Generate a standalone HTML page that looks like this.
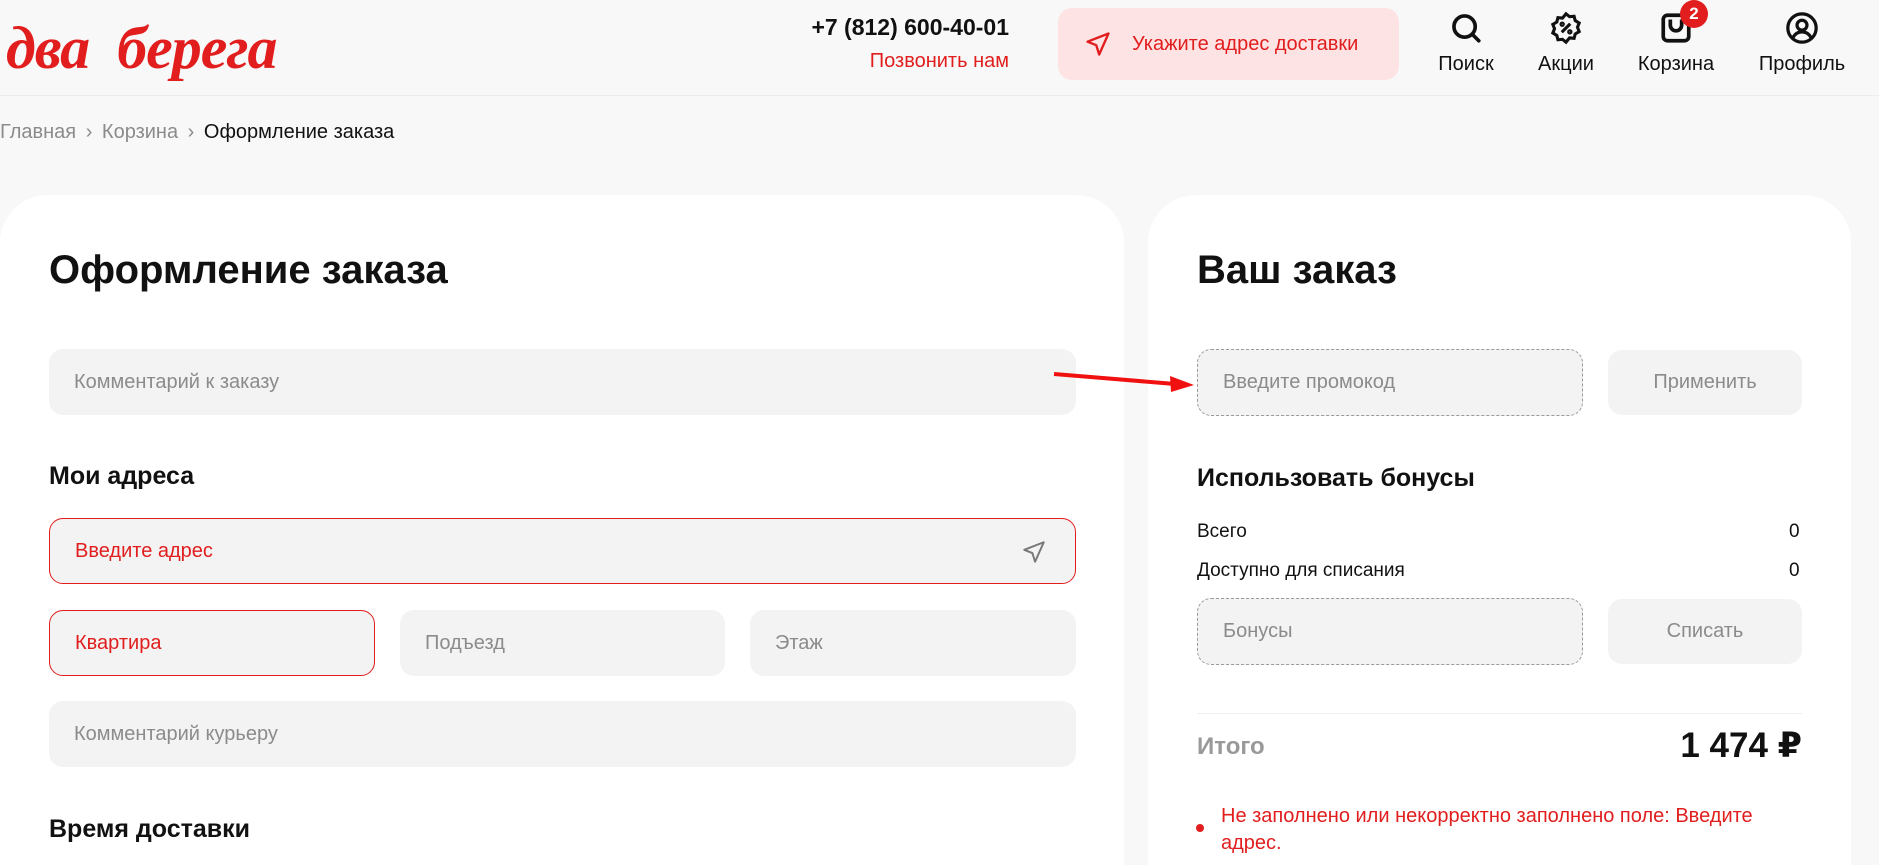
<!DOCTYPE html>
<html><head><meta charset="utf-8"><style>
*{box-sizing:border-box;margin:0;padding:0}
body{width:1879px;height:865px;overflow:hidden;background:#f8f8f8;font-family:"Liberation Sans","DejaVu Sans",sans-serif;color:#111;position:relative}
.a{position:absolute}
.hdr{left:0;top:0;width:1879px;height:96px;border-bottom:1px solid #ececec}
.logo{left:6px;top:14px;font-family:"Liberation Serif",serif;font-style:italic;font-weight:bold;font-size:60px;color:#e11d1d;letter-spacing:-1px}
.ico{text-align:center;width:120px;font-size:20px}
.ico svg{display:block;margin:0 auto 8px}
.card{background:#fff;border-radius:48px 48px 0 0}
.inp{background:#f3f3f3;border-radius:14px;font-size:20px;color:#8b8b8b;padding-left:25px;display:flex;align-items:center}
.btn{background:#f3f3f3;border-radius:14px;font-size:20px;color:#8b8b8b;display:flex;align-items:center;justify-content:center}
.red{border:1px solid #e11d1d;color:#e11d1d}
.dash{border:1px dashed #9a9a9a}
h1{font-size:40px;font-weight:bold}
h2{font-size:25px;font-weight:bold}
.t20{font-size:19px}
</style></head><body>
<div class="a hdr"></div>
<div class="a logo">два&nbsp;&nbsp;берега</div>
<div class="a" style="right:870px;top:14px;font-size:23px;font-weight:bold;text-align:right">+7 (812) 600-40-01</div>
<div class="a" style="right:870px;top:50px;font-size:20px;color:#e11d1d">Позвонить нам</div>
<div class="a" style="left:1058px;top:8px;width:341px;height:72px;background:#fde3e3;border-radius:14px;display:flex;align-items:center;color:#e11d1d;font-size:20px">
<svg style="margin:0 20px 0 26px" width="28" height="28" viewBox="0 0 24 24" fill="none" stroke="#e11d1d" stroke-width="2" stroke-linejoin="round"><path d="M21 3 3 10l7.5 3L13 21z"/></svg>Укажите адрес доставки</div>
<div class="a ico" style="left:1406px;top:11px"><svg width="34" height="34" viewBox="0 0 24 24" fill="none" stroke="#111" stroke-width="2.6"><circle cx="11" cy="11" r="7.5"/><path d="M16.5 16.5 21 21" stroke-linecap="round"/></svg>Поиск</div>
<div class="a ico" style="left:1506px;top:11px"><svg width="34" height="34" viewBox="0 0 24 24" fill="none" stroke="#111" stroke-width="2.2"><path d="M12 2l2.5 2 3.2-.3.8 3.1 2.8 1.7-1.2 3 1.2 3-2.8 1.7-.8 3.1-3.2-.3L12 22l-2.5-2-3.2.3-.8-3.1-2.8-1.7 1.2-3-1.2-3 2.8-1.7.8-3.1 3.2.3z"/><path d="M9 15l6-6"/><circle cx="9.3" cy="9.3" r=".8"/><circle cx="14.7" cy="14.7" r=".8"/></svg>Акции</div>
<div class="a ico" style="left:1616px;top:11px"><svg width="34" height="34" viewBox="0 0 24 24" fill="none" stroke="#111" stroke-width="2.6"><rect x="3" y="3" width="18" height="18" rx="3"/><path d="M8 6v4a4 4 0 0 0 8 0V6"/></svg>Корзина</div>
<div class="a" style="left:1680px;top:0;width:28px;height:28px;border-radius:50%;background:#e11d1d;color:#fff;font-size:17px;font-weight:bold;text-align:center;line-height:28px">2</div>
<div class="a ico" style="left:1742px;top:11px"><svg width="34" height="34" viewBox="0 0 24 24" fill="none" stroke="#111" stroke-width="2.3"><circle cx="12" cy="12" r="10"/><circle cx="12" cy="10" r="3.5"/><path d="M5.5 19c1.5-3 4-4.3 6.5-4.3s5 1.3 6.5 4.3"/></svg>Профиль</div>
<div class="a" style="left:0;top:121px;font-size:20px;color:#8b8b8b">Главная <span style="margin:0 4px">›</span> Корзина <span style="margin:0 4px">›</span> <span style="color:#111">Оформление заказа</span></div>
<div class="a card" style="left:0;top:195px;width:1124px;height:670px"></div>
<div class="a card" style="left:1148px;top:195px;width:703px;height:670px"></div>
<h1 class="a" style="left:49px;top:248px">Оформление заказа</h1>
<div class="a inp" style="left:49px;top:349px;width:1027px;height:66px">Комментарий к заказу</div>
<h2 class="a" style="left:49px;top:462px">Мои адреса</h2>
<div class="a inp red" style="left:49px;top:518px;width:1027px;height:66px">Введите адрес
<svg style="position:absolute;right:28px;top:20px" width="26" height="26" viewBox="0 0 24 24" fill="none" stroke="#777" stroke-width="1.8" stroke-linejoin="round"><path d="M21 3 3 10l7.5 3L13 21z"/></svg></div>
<div class="a inp red" style="left:49px;top:610px;width:326px;height:66px">Квартира</div>
<div class="a inp" style="left:400px;top:610px;width:325px;height:66px">Подъезд</div>
<div class="a inp" style="left:750px;top:610px;width:326px;height:66px">Этаж</div>
<div class="a inp" style="left:49px;top:701px;width:1027px;height:66px">Комментарий курьеру</div>
<h2 class="a" style="left:49px;top:815px">Время доставки</h2>
<h1 class="a" style="left:1197px;top:248px">Ваш заказ</h1>
<div class="a inp dash" style="left:1197px;top:349px;width:386px;height:67px">Введите промокод</div>
<div class="a btn" style="left:1608px;top:350px;width:194px;height:65px">Применить</div>
<h2 class="a" style="left:1197px;top:464px">Использовать бонусы</h2>
<div class="a t20" style="left:1197px;top:521px">Всего</div><div class="a t20" style="left:1789px;top:521px">0</div>
<div class="a t20" style="left:1197px;top:560px">Доступно для списания</div><div class="a t20" style="left:1789px;top:560px">0</div>
<div class="a inp dash" style="left:1197px;top:598px;width:386px;height:67px">Бонусы</div>
<div class="a btn" style="left:1608px;top:599px;width:194px;height:65px">Списать</div>
<div class="a" style="left:1197px;top:713px;width:605px;height:1px;background:#eee"></div>
<div class="a" style="left:1197px;top:733px;font-size:24px;font-weight:bold;color:#999">Итого</div>
<div class="a" style="right:77px;top:726px;font-size:35px;font-weight:bold">1 474 ₽</div>
<div class="a" style="left:1196px;top:824px;width:8px;height:8px;border-radius:50%;background:#e11d1d"></div>
<div class="a" style="left:1221px;top:803px;width:575px;font-size:20px;line-height:27px;color:#e11d1d">Не заполнено или некорректно заполнено поле: Введите адрес.</div>
<svg class="a" style="left:0;top:0" width="1879" height="865"><line x1="1054" y1="374" x2="1175" y2="384" stroke="#f01010" stroke-width="4"/><path d="M1194 385 1170 376 1171 392z" fill="#f01010"/></svg>
</body></html>
